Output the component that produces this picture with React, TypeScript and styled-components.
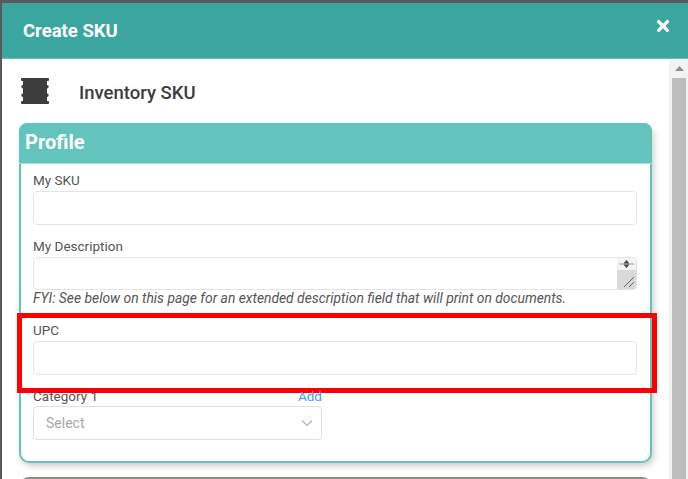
import React from "react";
import styled, { createGlobalStyle } from "styled-components";
import { FaTimes } from "react-icons/fa";

const GlobalStyle = createGlobalStyle`
  html, body {
    margin: 0;
    padding: 0;
    background: #5a5a5a;
    font-family: Roboto, "Liberation Sans", sans-serif;
  }
  * {
    box-sizing: border-box;
  }
`;

const Page = styled.div`
  width: 688px;
  height: 479px;
  padding: 3px 0 0 2px;
  overflow: hidden;
  background: #5a5a5a;
`;

const Dialog = styled.div`
  height: 476px;
  display: flex;
  flex-direction: column;
  background: #ffffff;
`;

const Header = styled.div`
  flex: 0 0 56px;
  display: flex;
  align-items: flex-start;
  justify-content: space-between;
  padding: 16px 17px 0 21px;
  background: #3ba69f;
  border-bottom: 1px solid #62c4bc;
  color: #ffffff;
`;

const HeaderTitle = styled.div`
  font-size: 18.5px;
  font-weight: 700;
  line-height: 22px;
  padding-top: 1px;
`;

const CloseIcon = styled(FaTimes)`
  width: 16px;
  height: 18px;
  display: block;
  margin-top: -2px;
`;

const Main = styled.div`
  flex: 1;
  display: flex;
  min-height: 0;
`;

const Content = styled.div`
  flex: 1;
  min-width: 0;
  padding: 19px 17px 0 17px;
`;

const Scrollbar = styled.div`
  flex: 0 0 19px;
  display: flex;
  flex-direction: column;
  align-items: stretch;
  padding: 0 2px 0 3px;
  background: #f3f3f3;
`;

const ScrollArrow = styled.div`
  flex: 0 0 19px;
  display: flex;
  align-items: center;
  justify-content: center;
`;

const ScrollThumb = styled.div`
  flex: 1;
  background: #bdbdbd;
`;

const SkuHeading = styled.div`
  display: flex;
  align-items: center;
  gap: 30px;
  height: 26px;
  padding-left: 2px;
`;

const SkuTitle = styled.div`
  font-size: 18.5px;
  font-weight: 500;
  line-height: 22px;
  padding-top: 4px;
  color: #3c3c3c;
`;

const Card = styled.section`
  margin-top: 19px;
  height: 340px;
  border: 2px solid #62c4bc;
  border-radius: 10px;
  background: #ffffff;
  box-shadow: 2px 3px 6px rgba(0, 0, 0, 0.2);
`;

const CardHeader = styled.div`
  height: 41px;
  margin: -2px -2px 0;
  padding: 5px 0 0 6px;
  background: #62c4bc;
  border-radius: 8px 8px 0 0;
  border-bottom: 1px solid #a9e0da;
  color: #ffffff;
  font-size: 20px;
  font-weight: 700;
  line-height: 28px;
`;

const CardBody = styled.div`
  padding: 8px 13px 0 12px;
  display: flex;
  flex-direction: column;
`;

const Field = styled.div<{ $top?: number }>`
  position: relative;
  margin-top: ${(p) => p.$top ?? 0}px;
`;

const Label = styled.label`
  display: flex;
  justify-content: space-between;
  height: 17px;
  margin-bottom: 2px;
  font-size: 13.5px;
  line-height: 17px;
  color: #555555;
`;

const AddLink = styled.span`
  color: #3f9bf0;
`;

const TextInput = styled.input`
  display: block;
  width: 100%;
  height: 34px;
  padding: 0 12px;
  background: #ffffff;
  border: 1.5px solid #e4e4e4;
  border-radius: 4px;
  outline: none;
`;

const TextAreaBox = styled.div`
  position: relative;
  height: 33px;
`;

const TextArea = styled.textarea`
  display: block;
  width: 100%;
  height: 33px;
  padding: 4px 12px;
  background: #ffffff;
  border: 1.5px solid #e4e4e4;
  border-radius: 4px;
  outline: none;
  resize: none;
  overflow: hidden;
`;

const SpinnerGutter = styled.div`
  position: absolute;
  top: 1px;
  right: 1px;
  bottom: 1px;
  width: 19px;
  display: flex;
  flex-direction: column;
  background: #d9d9d9;
  border-radius: 0 3px 3px 0;
`;

const SpinnerTop = styled.div`
  flex: 0 0 12px;
  display: flex;
  align-items: center;
  justify-content: center;
  background: #f4f4f4;
`;

const Grip = styled.div`
  flex: 1;
  display: flex;
  align-items: flex-end;
  justify-content: flex-end;
  padding: 0 1px 1px 0;
`;

const Hint = styled.div`
  height: 16px;
  font-size: 13.85px;
  font-style: italic;
  line-height: 16px;
  color: #555555;
  white-space: nowrap;
`;

const Highlight = styled.div`
  position: absolute;
  left: -16px;
  right: -20px;
  top: -9px;
  height: 80px;
  border: 5px solid #ff0000;
  pointer-events: none;
`;

const SelectBox = styled.div`
  width: 289px;
  height: 34px;
  display: flex;
  align-items: center;
  justify-content: space-between;
  padding: 0 8px 0 12px;
  background: #ffffff;
  border: 1.5px solid #e0e0e0;
  border-radius: 4px;
  font-size: 14px;
  color: #a8a8a8;
`;

const CategoryField = styled(Field)`
  width: 289px;

  ${Label} {
    margin-bottom: 1px;
  }
`;

const NextCard = styled.div`
  margin-top: 14px;
  height: 40px;
  border-radius: 10px 10px 0 0;
  background: #8f8f88;
`;

const SkuIcon = () => (
  <svg width="28" height="26" viewBox="0 0 28 26" fill="#3d3d3d">
    <path d="M1 0h26a1 1 0 0 1 1 1v1a1 1 0 0 1-1 1h-1v4a1.7 1.7 0 0 1 0 3.4v5.2a1.7 1.7 0 0 1 0 3.4v4h1a1 1 0 0 1 1 1v1a1 1 0 0 1-1 1H1a1 1 0 0 1-1-1v-1a1 1 0 0 1 1-1h1v-4a1.7 1.7 0 0 1 0-3.4v-5.2A1.7 1.7 0 0 1 2 7V3H1a1 1 0 0 1-1-1V1a1 1 0 0 1 1-1z" />
  </svg>
);

const App = () => {
  return (
    <Page>
      <GlobalStyle />
      <Dialog>
        <Header>
          <HeaderTitle>Create SKU</HeaderTitle>
          <CloseIcon />
        </Header>
        <Main>
          <Content>
            <SkuHeading>
              <SkuIcon />
              <SkuTitle>Inventory SKU</SkuTitle>
            </SkuHeading>
            <Card>
              <CardHeader>Profile</CardHeader>
              <CardBody>
                <Field>
                  <Label>My SKU</Label>
                  <TextInput />
                </Field>
                <Field $top={13}>
                  <Label>My Description</Label>
                  <TextAreaBox>
                    <TextArea />
                    <SpinnerGutter>
                      <SpinnerTop>
                        <svg width="15" height="10" viewBox="0 0 15 10">
                          <path d="M0 5h15" stroke="#9a9a9a" strokeWidth="1" />
                          <path d="M7.5 1l3 3.5H4.5zM7.5 9L4.5 5.5h6z" fill="#444444" />
                        </svg>
                      </SpinnerTop>
                      <Grip>
                        <svg width="12" height="12" viewBox="0 0 12 12">
                          <path d="M1 11L11 1M6 11l5-5" stroke="#666666" strokeWidth="1" />
                        </svg>
                      </Grip>
                    </SpinnerGutter>
                  </TextAreaBox>
                  <Hint>FYI: See below on this page for an extended description field that will print on documents.</Hint>
                </Field>
                <Field $top={16}>
                  <Label>UPC</Label>
                  <TextInput />
                  <Highlight />
                </Field>
                <CategoryField $top={13}>
                  <Label>
                    Category 1<AddLink>Add</AddLink>
                  </Label>
                  <SelectBox>
                    Select
                    <svg width="12" height="8" viewBox="0 0 12 8" fill="none">
                      <path d="M1 1.5l5 5 5-5" stroke="#b0b0b0" strokeWidth="1.2" />
                    </svg>
                  </SelectBox>
                </CategoryField>
              </CardBody>
            </Card>
            <NextCard />
          </Content>
          <Scrollbar>
            <ScrollArrow>
              <svg width="9" height="5" viewBox="0 0 9 5">
                <path d="M4.5 0L9 5H0z" fill="#8f8f8f" />
              </svg>
            </ScrollArrow>
            <ScrollThumb />
          </Scrollbar>
        </Main>
      </Dialog>
    </Page>
  );
};

export default App;
